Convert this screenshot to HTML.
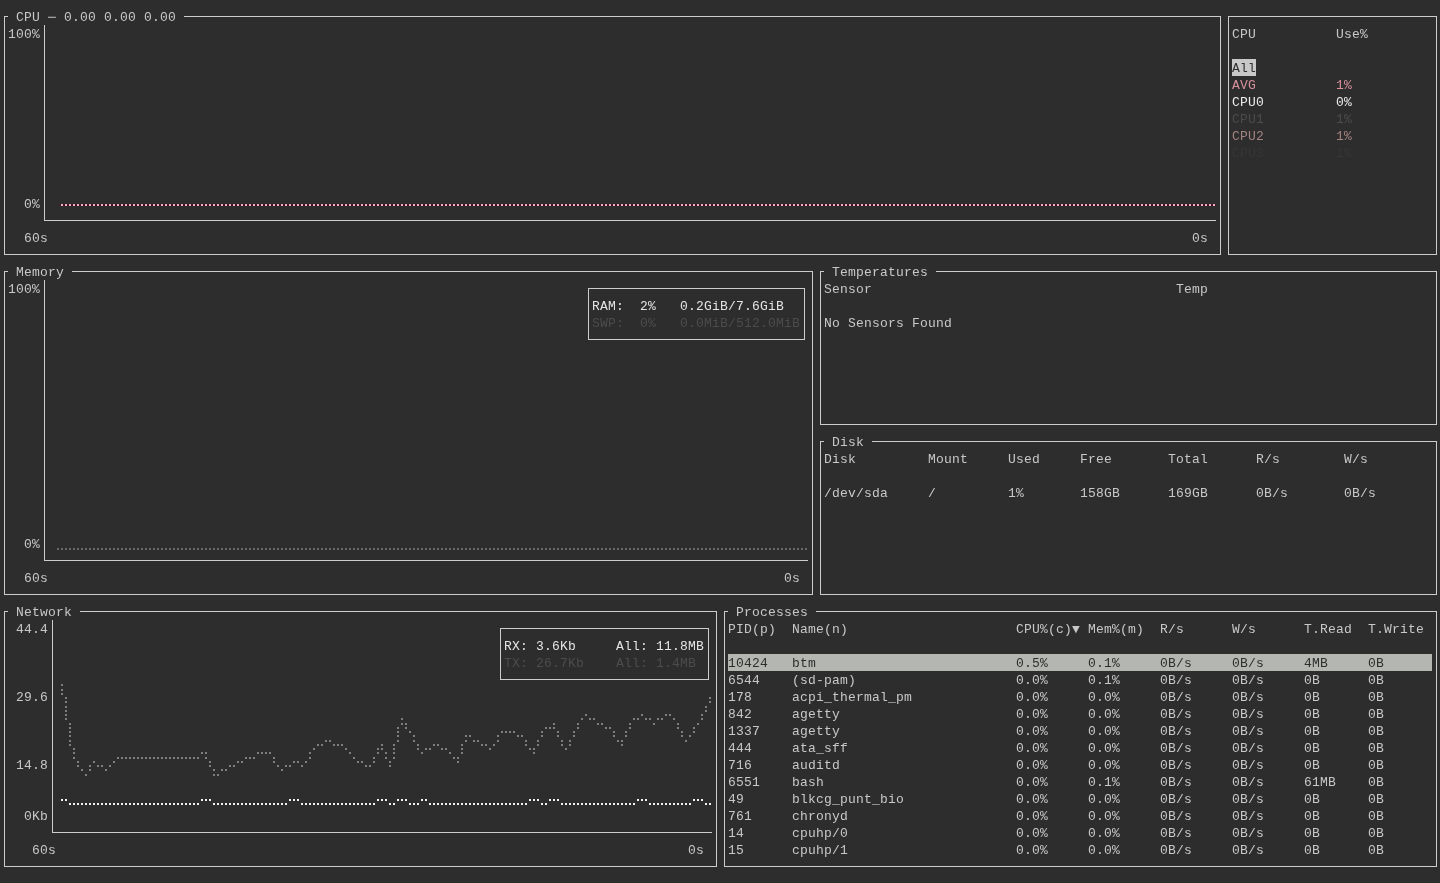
<!DOCTYPE html><html><head><meta charset="utf-8"><style>
html,body{margin:0;padding:0;}
body{width:1440px;height:883px;background:#2d2d2d;position:relative;overflow:hidden;font-family:"Liberation Mono",monospace;font-size:13.0px;}
.t{position:absolute;white-space:pre;letter-spacing:0.200px;line-height:17px;height:17px;}
svg{position:absolute;left:0;top:0;}
#tx{position:absolute;left:0;top:0;width:1440px;height:883px;will-change:transform;}
</style></head><body>
<div style="position:absolute;left:1232px;top:59px;width:24px;height:17px;background:#c8c8c8"></div>
<div style="position:absolute;left:728px;top:654px;width:704px;height:17px;background:#b4b6b2"></div>
<div id="tx">
<div class="t" style="left:16px;top:9px;color:#c8c8c8;">CPU ─ 0.00 0.00 0.00</div>
<div class="t" style="left:8px;top:26px;color:#c8c8c8;">100%</div>
<div class="t" style="left:24px;top:196px;color:#c8c8c8;">0%</div>
<div class="t" style="left:24px;top:230px;color:#c8c8c8;">60s</div>
<div class="t" style="left:1192px;top:230px;color:#c8c8c8;">0s</div>
<div class="t" style="left:1232px;top:26px;color:#c8c8c8;">CPU</div>
<div class="t" style="left:1336px;top:26px;color:#c8c8c8;">Use%</div>
<div class="t" style="left:1232px;top:60px;color:#2d2d2d;">All</div>
<div class="t" style="left:1232px;top:77px;color:#d8909e;">AVG</div>
<div class="t" style="left:1336px;top:77px;color:#d8909e;">1%</div>
<div class="t" style="left:1232px;top:94px;color:#ececec;">CPU0</div>
<div class="t" style="left:1336px;top:94px;color:#ececec;">0%</div>
<div class="t" style="left:1232px;top:111px;color:#4c4c4c;">CPU1</div>
<div class="t" style="left:1336px;top:111px;color:#4c4c4c;">1%</div>
<div class="t" style="left:1232px;top:128px;color:#a48480;">CPU2</div>
<div class="t" style="left:1336px;top:128px;color:#a48480;">1%</div>
<div class="t" style="left:1232px;top:145px;color:#363636;">CPU3</div>
<div class="t" style="left:1336px;top:145px;color:#363636;">1%</div>
<div class="t" style="left:16px;top:264px;color:#c8c8c8;">Memory</div>
<div class="t" style="left:8px;top:281px;color:#c8c8c8;">100%</div>
<div class="t" style="left:24px;top:536px;color:#c8c8c8;">0%</div>
<div class="t" style="left:24px;top:570px;color:#c8c8c8;">60s</div>
<div class="t" style="left:784px;top:570px;color:#c8c8c8;">0s</div>
<div class="t" style="left:592px;top:298px;color:#e4e4e4;">RAM:</div>
<div class="t" style="left:640px;top:298px;color:#e4e4e4;">2%</div>
<div class="t" style="left:680px;top:298px;color:#e4e4e4;">0.2GiB/7.6GiB</div>
<div class="t" style="left:592px;top:315px;color:#4c4c4c;">SWP:</div>
<div class="t" style="left:640px;top:315px;color:#4c4c4c;">0%</div>
<div class="t" style="left:680px;top:315px;color:#4c4c4c;">0.0MiB/512.0MiB</div>
<div class="t" style="left:832px;top:264px;color:#c8c8c8;">Temperatures</div>
<div class="t" style="left:824px;top:281px;color:#c8c8c8;">Sensor</div>
<div class="t" style="left:1176px;top:281px;color:#c8c8c8;">Temp</div>
<div class="t" style="left:824px;top:315px;color:#c8c8c8;">No Sensors Found</div>
<div class="t" style="left:832px;top:434px;color:#c8c8c8;">Disk</div>
<div class="t" style="left:824px;top:451px;color:#c8c8c8;">Disk</div>
<div class="t" style="left:928px;top:451px;color:#c8c8c8;">Mount</div>
<div class="t" style="left:1008px;top:451px;color:#c8c8c8;">Used</div>
<div class="t" style="left:1080px;top:451px;color:#c8c8c8;">Free</div>
<div class="t" style="left:1168px;top:451px;color:#c8c8c8;">Total</div>
<div class="t" style="left:1256px;top:451px;color:#c8c8c8;">R/s</div>
<div class="t" style="left:1344px;top:451px;color:#c8c8c8;">W/s</div>
<div class="t" style="left:824px;top:485px;color:#c8c8c8;">/dev/sda</div>
<div class="t" style="left:928px;top:485px;color:#c8c8c8;">/</div>
<div class="t" style="left:1008px;top:485px;color:#c8c8c8;">1%</div>
<div class="t" style="left:1080px;top:485px;color:#c8c8c8;">158GB</div>
<div class="t" style="left:1168px;top:485px;color:#c8c8c8;">169GB</div>
<div class="t" style="left:1256px;top:485px;color:#c8c8c8;">0B/s</div>
<div class="t" style="left:1344px;top:485px;color:#c8c8c8;">0B/s</div>
<div class="t" style="left:16px;top:604px;color:#c8c8c8;">Network</div>
<div class="t" style="left:16px;top:621px;color:#c8c8c8;">44.4</div>
<div class="t" style="left:16px;top:689px;color:#c8c8c8;">29.6</div>
<div class="t" style="left:16px;top:757px;color:#c8c8c8;">14.8</div>
<div class="t" style="left:24px;top:808px;color:#c8c8c8;">0Kb</div>
<div class="t" style="left:32px;top:842px;color:#c8c8c8;">60s</div>
<div class="t" style="left:688px;top:842px;color:#c8c8c8;">0s</div>
<div class="t" style="left:504px;top:638px;color:#e4e4e4;">RX:</div>
<div class="t" style="left:536px;top:638px;color:#e4e4e4;">3.6Kb</div>
<div class="t" style="left:616px;top:638px;color:#e4e4e4;">All:</div>
<div class="t" style="left:656px;top:638px;color:#e4e4e4;">11.8MB</div>
<div class="t" style="left:504px;top:655px;color:#4c4c4c;">TX:</div>
<div class="t" style="left:536px;top:655px;color:#4c4c4c;">26.7Kb</div>
<div class="t" style="left:616px;top:655px;color:#4c4c4c;">All:</div>
<div class="t" style="left:656px;top:655px;color:#4c4c4c;">1.4MB</div>
<div class="t" style="left:736px;top:604px;color:#c8c8c8;">Processes</div>
<div class="t" style="left:728px;top:621px;color:#c8c8c8;">PID(p)</div>
<div class="t" style="left:792px;top:621px;color:#c8c8c8;">Name(n)</div>
<div class="t" style="left:1016px;top:621px;color:#c8c8c8;">CPU%(c)▼</div>
<div class="t" style="left:1088px;top:621px;color:#c8c8c8;">Mem%(m)</div>
<div class="t" style="left:1160px;top:621px;color:#c8c8c8;">R/s</div>
<div class="t" style="left:1232px;top:621px;color:#c8c8c8;">W/s</div>
<div class="t" style="left:1304px;top:621px;color:#c8c8c8;">T.Read</div>
<div class="t" style="left:1368px;top:621px;color:#c8c8c8;">T.Write</div>
<div class="t" style="left:728px;top:655px;color:#2e2e2e;">10424</div>
<div class="t" style="left:792px;top:655px;color:#2e2e2e;">btm</div>
<div class="t" style="left:1016px;top:655px;color:#2e2e2e;">0.5%</div>
<div class="t" style="left:1088px;top:655px;color:#2e2e2e;">0.1%</div>
<div class="t" style="left:1160px;top:655px;color:#2e2e2e;">0B/s</div>
<div class="t" style="left:1232px;top:655px;color:#2e2e2e;">0B/s</div>
<div class="t" style="left:1304px;top:655px;color:#2e2e2e;">4MB</div>
<div class="t" style="left:1368px;top:655px;color:#2e2e2e;">0B</div>
<div class="t" style="left:728px;top:672px;color:#c8c8c8;">6544</div>
<div class="t" style="left:792px;top:672px;color:#c8c8c8;">(sd-pam)</div>
<div class="t" style="left:1016px;top:672px;color:#c8c8c8;">0.0%</div>
<div class="t" style="left:1088px;top:672px;color:#c8c8c8;">0.1%</div>
<div class="t" style="left:1160px;top:672px;color:#c8c8c8;">0B/s</div>
<div class="t" style="left:1232px;top:672px;color:#c8c8c8;">0B/s</div>
<div class="t" style="left:1304px;top:672px;color:#c8c8c8;">0B</div>
<div class="t" style="left:1368px;top:672px;color:#c8c8c8;">0B</div>
<div class="t" style="left:728px;top:689px;color:#c8c8c8;">178</div>
<div class="t" style="left:792px;top:689px;color:#c8c8c8;">acpi_thermal_pm</div>
<div class="t" style="left:1016px;top:689px;color:#c8c8c8;">0.0%</div>
<div class="t" style="left:1088px;top:689px;color:#c8c8c8;">0.0%</div>
<div class="t" style="left:1160px;top:689px;color:#c8c8c8;">0B/s</div>
<div class="t" style="left:1232px;top:689px;color:#c8c8c8;">0B/s</div>
<div class="t" style="left:1304px;top:689px;color:#c8c8c8;">0B</div>
<div class="t" style="left:1368px;top:689px;color:#c8c8c8;">0B</div>
<div class="t" style="left:728px;top:706px;color:#c8c8c8;">842</div>
<div class="t" style="left:792px;top:706px;color:#c8c8c8;">agetty</div>
<div class="t" style="left:1016px;top:706px;color:#c8c8c8;">0.0%</div>
<div class="t" style="left:1088px;top:706px;color:#c8c8c8;">0.0%</div>
<div class="t" style="left:1160px;top:706px;color:#c8c8c8;">0B/s</div>
<div class="t" style="left:1232px;top:706px;color:#c8c8c8;">0B/s</div>
<div class="t" style="left:1304px;top:706px;color:#c8c8c8;">0B</div>
<div class="t" style="left:1368px;top:706px;color:#c8c8c8;">0B</div>
<div class="t" style="left:728px;top:723px;color:#c8c8c8;">1337</div>
<div class="t" style="left:792px;top:723px;color:#c8c8c8;">agetty</div>
<div class="t" style="left:1016px;top:723px;color:#c8c8c8;">0.0%</div>
<div class="t" style="left:1088px;top:723px;color:#c8c8c8;">0.0%</div>
<div class="t" style="left:1160px;top:723px;color:#c8c8c8;">0B/s</div>
<div class="t" style="left:1232px;top:723px;color:#c8c8c8;">0B/s</div>
<div class="t" style="left:1304px;top:723px;color:#c8c8c8;">0B</div>
<div class="t" style="left:1368px;top:723px;color:#c8c8c8;">0B</div>
<div class="t" style="left:728px;top:740px;color:#c8c8c8;">444</div>
<div class="t" style="left:792px;top:740px;color:#c8c8c8;">ata_sff</div>
<div class="t" style="left:1016px;top:740px;color:#c8c8c8;">0.0%</div>
<div class="t" style="left:1088px;top:740px;color:#c8c8c8;">0.0%</div>
<div class="t" style="left:1160px;top:740px;color:#c8c8c8;">0B/s</div>
<div class="t" style="left:1232px;top:740px;color:#c8c8c8;">0B/s</div>
<div class="t" style="left:1304px;top:740px;color:#c8c8c8;">0B</div>
<div class="t" style="left:1368px;top:740px;color:#c8c8c8;">0B</div>
<div class="t" style="left:728px;top:757px;color:#c8c8c8;">716</div>
<div class="t" style="left:792px;top:757px;color:#c8c8c8;">auditd</div>
<div class="t" style="left:1016px;top:757px;color:#c8c8c8;">0.0%</div>
<div class="t" style="left:1088px;top:757px;color:#c8c8c8;">0.0%</div>
<div class="t" style="left:1160px;top:757px;color:#c8c8c8;">0B/s</div>
<div class="t" style="left:1232px;top:757px;color:#c8c8c8;">0B/s</div>
<div class="t" style="left:1304px;top:757px;color:#c8c8c8;">0B</div>
<div class="t" style="left:1368px;top:757px;color:#c8c8c8;">0B</div>
<div class="t" style="left:728px;top:774px;color:#c8c8c8;">6551</div>
<div class="t" style="left:792px;top:774px;color:#c8c8c8;">bash</div>
<div class="t" style="left:1016px;top:774px;color:#c8c8c8;">0.0%</div>
<div class="t" style="left:1088px;top:774px;color:#c8c8c8;">0.1%</div>
<div class="t" style="left:1160px;top:774px;color:#c8c8c8;">0B/s</div>
<div class="t" style="left:1232px;top:774px;color:#c8c8c8;">0B/s</div>
<div class="t" style="left:1304px;top:774px;color:#c8c8c8;">61MB</div>
<div class="t" style="left:1368px;top:774px;color:#c8c8c8;">0B</div>
<div class="t" style="left:728px;top:791px;color:#c8c8c8;">49</div>
<div class="t" style="left:792px;top:791px;color:#c8c8c8;">blkcg_punt_bio</div>
<div class="t" style="left:1016px;top:791px;color:#c8c8c8;">0.0%</div>
<div class="t" style="left:1088px;top:791px;color:#c8c8c8;">0.0%</div>
<div class="t" style="left:1160px;top:791px;color:#c8c8c8;">0B/s</div>
<div class="t" style="left:1232px;top:791px;color:#c8c8c8;">0B/s</div>
<div class="t" style="left:1304px;top:791px;color:#c8c8c8;">0B</div>
<div class="t" style="left:1368px;top:791px;color:#c8c8c8;">0B</div>
<div class="t" style="left:728px;top:808px;color:#c8c8c8;">761</div>
<div class="t" style="left:792px;top:808px;color:#c8c8c8;">chronyd</div>
<div class="t" style="left:1016px;top:808px;color:#c8c8c8;">0.0%</div>
<div class="t" style="left:1088px;top:808px;color:#c8c8c8;">0.0%</div>
<div class="t" style="left:1160px;top:808px;color:#c8c8c8;">0B/s</div>
<div class="t" style="left:1232px;top:808px;color:#c8c8c8;">0B/s</div>
<div class="t" style="left:1304px;top:808px;color:#c8c8c8;">0B</div>
<div class="t" style="left:1368px;top:808px;color:#c8c8c8;">0B</div>
<div class="t" style="left:728px;top:825px;color:#c8c8c8;">14</div>
<div class="t" style="left:792px;top:825px;color:#c8c8c8;">cpuhp/0</div>
<div class="t" style="left:1016px;top:825px;color:#c8c8c8;">0.0%</div>
<div class="t" style="left:1088px;top:825px;color:#c8c8c8;">0.0%</div>
<div class="t" style="left:1160px;top:825px;color:#c8c8c8;">0B/s</div>
<div class="t" style="left:1232px;top:825px;color:#c8c8c8;">0B/s</div>
<div class="t" style="left:1304px;top:825px;color:#c8c8c8;">0B</div>
<div class="t" style="left:1368px;top:825px;color:#c8c8c8;">0B</div>
<div class="t" style="left:728px;top:842px;color:#c8c8c8;">15</div>
<div class="t" style="left:792px;top:842px;color:#c8c8c8;">cpuhp/1</div>
<div class="t" style="left:1016px;top:842px;color:#c8c8c8;">0.0%</div>
<div class="t" style="left:1088px;top:842px;color:#c8c8c8;">0.0%</div>
<div class="t" style="left:1160px;top:842px;color:#c8c8c8;">0B/s</div>
<div class="t" style="left:1232px;top:842px;color:#c8c8c8;">0B/s</div>
<div class="t" style="left:1304px;top:842px;color:#c8c8c8;">0B</div>
<div class="t" style="left:1368px;top:842px;color:#c8c8c8;">0B</div>
</div>
<svg width="1440" height="883" shape-rendering="crispEdges"><rect x="60" y="205" width="1156" height="1" fill="#4a1020"/><rect x="60" y="204" width="1156" height="1" fill="#4a1020"/><rect x="4" y="16" width="4" height="1" fill="#cccccc"/><rect x="184" y="16" width="1037" height="1" fill="#cccccc"/><rect x="4" y="254" width="1217" height="1" fill="#cccccc"/><rect x="44" y="220" width="1172" height="1" fill="#cccccc"/><rect x="1228" y="16" width="209" height="1" fill="#cccccc"/><rect x="1228" y="254" width="209" height="1" fill="#cccccc"/><rect x="4" y="271" width="4" height="1" fill="#cccccc"/><rect x="72" y="271" width="741" height="1" fill="#cccccc"/><rect x="4" y="594" width="809" height="1" fill="#cccccc"/><rect x="44" y="560" width="764" height="1" fill="#cccccc"/><rect x="588" y="288" width="217" height="1" fill="#cccccc"/><rect x="588" y="339" width="217" height="1" fill="#cccccc"/><rect x="820" y="271" width="4" height="1" fill="#cccccc"/><rect x="936" y="271" width="501" height="1" fill="#cccccc"/><rect x="820" y="424" width="617" height="1" fill="#cccccc"/><rect x="820" y="441" width="4" height="1" fill="#cccccc"/><rect x="872" y="441" width="565" height="1" fill="#cccccc"/><rect x="820" y="594" width="617" height="1" fill="#cccccc"/><rect x="4" y="611" width="4" height="1" fill="#cccccc"/><rect x="80" y="611" width="637" height="1" fill="#cccccc"/><rect x="4" y="866" width="713" height="1" fill="#cccccc"/><rect x="52" y="832" width="660" height="1" fill="#cccccc"/><rect x="500" y="628" width="209" height="1" fill="#cccccc"/><rect x="500" y="679" width="209" height="1" fill="#cccccc"/><rect x="724" y="611" width="4" height="1" fill="#cccccc"/><rect x="816" y="611" width="621" height="1" fill="#cccccc"/><rect x="724" y="866" width="713" height="1" fill="#cccccc"/><rect x="4" y="16" width="1" height="239" fill="#cccccc"/><rect x="1220" y="16" width="1" height="239" fill="#cccccc"/><rect x="44" y="25" width="1" height="196" fill="#cccccc"/><rect x="1228" y="16" width="1" height="239" fill="#cccccc"/><rect x="1436" y="16" width="1" height="239" fill="#cccccc"/><rect x="4" y="271" width="1" height="324" fill="#cccccc"/><rect x="812" y="271" width="1" height="324" fill="#cccccc"/><rect x="44" y="280" width="1" height="281" fill="#cccccc"/><rect x="588" y="288" width="1" height="52" fill="#cccccc"/><rect x="804" y="288" width="1" height="52" fill="#cccccc"/><rect x="820" y="271" width="1" height="154" fill="#cccccc"/><rect x="1436" y="271" width="1" height="154" fill="#cccccc"/><rect x="820" y="441" width="1" height="154" fill="#cccccc"/><rect x="1436" y="441" width="1" height="154" fill="#cccccc"/><rect x="4" y="611" width="1" height="256" fill="#cccccc"/><rect x="716" y="611" width="1" height="256" fill="#cccccc"/><rect x="52" y="620" width="1" height="213" fill="#cccccc"/><rect x="500" y="628" width="1" height="52" fill="#cccccc"/><rect x="708" y="628" width="1" height="52" fill="#cccccc"/><rect x="724" y="611" width="1" height="256" fill="#cccccc"/><rect x="1436" y="611" width="1" height="256" fill="#cccccc"/><path d="M61 204h2v2h-2zM65 204h2v2h-2zM69 204h2v2h-2zM73 204h2v2h-2zM77 204h2v2h-2zM81 204h2v2h-2zM85 204h2v2h-2zM89 204h2v2h-2zM93 204h2v2h-2zM97 204h2v2h-2zM101 204h2v2h-2zM105 204h2v2h-2zM109 204h2v2h-2zM113 204h2v2h-2zM117 204h2v2h-2zM121 204h2v2h-2zM125 204h2v2h-2zM129 204h2v2h-2zM133 204h2v2h-2zM137 204h2v2h-2zM141 204h2v2h-2zM145 204h2v2h-2zM149 204h2v2h-2zM153 204h2v2h-2zM157 204h2v2h-2zM161 204h2v2h-2zM165 204h2v2h-2zM169 204h2v2h-2zM173 204h2v2h-2zM177 204h2v2h-2zM181 204h2v2h-2zM185 204h2v2h-2zM189 204h2v2h-2zM193 204h2v2h-2zM197 204h2v2h-2zM201 204h2v2h-2zM205 204h2v2h-2zM209 204h2v2h-2zM213 204h2v2h-2zM217 204h2v2h-2zM221 204h2v2h-2zM225 204h2v2h-2zM229 204h2v2h-2zM233 204h2v2h-2zM237 204h2v2h-2zM241 204h2v2h-2zM245 204h2v2h-2zM249 204h2v2h-2zM253 204h2v2h-2zM257 204h2v2h-2zM261 204h2v2h-2zM265 204h2v2h-2zM269 204h2v2h-2zM273 204h2v2h-2zM277 204h2v2h-2zM281 204h2v2h-2zM285 204h2v2h-2zM289 204h2v2h-2zM293 204h2v2h-2zM297 204h2v2h-2zM301 204h2v2h-2zM305 204h2v2h-2zM309 204h2v2h-2zM313 204h2v2h-2zM317 204h2v2h-2zM321 204h2v2h-2zM325 204h2v2h-2zM329 204h2v2h-2zM333 204h2v2h-2zM337 204h2v2h-2zM341 204h2v2h-2zM345 204h2v2h-2zM349 204h2v2h-2zM353 204h2v2h-2zM357 204h2v2h-2zM361 204h2v2h-2zM365 204h2v2h-2zM369 204h2v2h-2zM373 204h2v2h-2zM377 204h2v2h-2zM381 204h2v2h-2zM385 204h2v2h-2zM389 204h2v2h-2zM393 204h2v2h-2zM397 204h2v2h-2zM401 204h2v2h-2zM405 204h2v2h-2zM409 204h2v2h-2zM413 204h2v2h-2zM417 204h2v2h-2zM421 204h2v2h-2zM425 204h2v2h-2zM429 204h2v2h-2zM433 204h2v2h-2zM437 204h2v2h-2zM441 204h2v2h-2zM445 204h2v2h-2zM449 204h2v2h-2zM453 204h2v2h-2zM457 204h2v2h-2zM461 204h2v2h-2zM465 204h2v2h-2zM469 204h2v2h-2zM473 204h2v2h-2zM477 204h2v2h-2zM481 204h2v2h-2zM485 204h2v2h-2zM489 204h2v2h-2zM493 204h2v2h-2zM497 204h2v2h-2zM501 204h2v2h-2zM505 204h2v2h-2zM509 204h2v2h-2zM513 204h2v2h-2zM517 204h2v2h-2zM521 204h2v2h-2zM525 204h2v2h-2zM529 204h2v2h-2zM533 204h2v2h-2zM537 204h2v2h-2zM541 204h2v2h-2zM545 204h2v2h-2zM549 204h2v2h-2zM553 204h2v2h-2zM557 204h2v2h-2zM561 204h2v2h-2zM565 204h2v2h-2zM569 204h2v2h-2zM573 204h2v2h-2zM577 204h2v2h-2zM581 204h2v2h-2zM585 204h2v2h-2zM589 204h2v2h-2zM593 204h2v2h-2zM597 204h2v2h-2zM601 204h2v2h-2zM605 204h2v2h-2zM609 204h2v2h-2zM613 204h2v2h-2zM617 204h2v2h-2zM621 204h2v2h-2zM625 204h2v2h-2zM629 204h2v2h-2zM633 204h2v2h-2zM637 204h2v2h-2zM641 204h2v2h-2zM645 204h2v2h-2zM649 204h2v2h-2zM653 204h2v2h-2zM657 204h2v2h-2zM661 204h2v2h-2zM665 204h2v2h-2zM669 204h2v2h-2zM673 204h2v2h-2zM677 204h2v2h-2zM681 204h2v2h-2zM685 204h2v2h-2zM689 204h2v2h-2zM693 204h2v2h-2zM697 204h2v2h-2zM701 204h2v2h-2zM705 204h2v2h-2zM709 204h2v2h-2zM713 204h2v2h-2zM717 204h2v2h-2zM721 204h2v2h-2zM725 204h2v2h-2zM729 204h2v2h-2zM733 204h2v2h-2zM737 204h2v2h-2zM741 204h2v2h-2zM745 204h2v2h-2zM749 204h2v2h-2zM753 204h2v2h-2zM757 204h2v2h-2zM761 204h2v2h-2zM765 204h2v2h-2zM769 204h2v2h-2zM773 204h2v2h-2zM777 204h2v2h-2zM781 204h2v2h-2zM785 204h2v2h-2zM789 204h2v2h-2zM793 204h2v2h-2zM797 204h2v2h-2zM801 204h2v2h-2zM805 204h2v2h-2zM809 204h2v2h-2zM813 204h2v2h-2zM817 204h2v2h-2zM821 204h2v2h-2zM825 204h2v2h-2zM829 204h2v2h-2zM833 204h2v2h-2zM837 204h2v2h-2zM841 204h2v2h-2zM845 204h2v2h-2zM849 204h2v2h-2zM853 204h2v2h-2zM857 204h2v2h-2zM861 204h2v2h-2zM865 204h2v2h-2zM869 204h2v2h-2zM873 204h2v2h-2zM877 204h2v2h-2zM881 204h2v2h-2zM885 204h2v2h-2zM889 204h2v2h-2zM893 204h2v2h-2zM897 204h2v2h-2zM901 204h2v2h-2zM905 204h2v2h-2zM909 204h2v2h-2zM913 204h2v2h-2zM917 204h2v2h-2zM921 204h2v2h-2zM925 204h2v2h-2zM929 204h2v2h-2zM933 204h2v2h-2zM937 204h2v2h-2zM941 204h2v2h-2zM945 204h2v2h-2zM949 204h2v2h-2zM953 204h2v2h-2zM957 204h2v2h-2zM961 204h2v2h-2zM965 204h2v2h-2zM969 204h2v2h-2zM973 204h2v2h-2zM977 204h2v2h-2zM981 204h2v2h-2zM985 204h2v2h-2zM989 204h2v2h-2zM993 204h2v2h-2zM997 204h2v2h-2zM1001 204h2v2h-2zM1005 204h2v2h-2zM1009 204h2v2h-2zM1013 204h2v2h-2zM1017 204h2v2h-2zM1021 204h2v2h-2zM1025 204h2v2h-2zM1029 204h2v2h-2zM1033 204h2v2h-2zM1037 204h2v2h-2zM1041 204h2v2h-2zM1045 204h2v2h-2zM1049 204h2v2h-2zM1053 204h2v2h-2zM1057 204h2v2h-2zM1061 204h2v2h-2zM1065 204h2v2h-2zM1069 204h2v2h-2zM1073 204h2v2h-2zM1077 204h2v2h-2zM1081 204h2v2h-2zM1085 204h2v2h-2zM1089 204h2v2h-2zM1093 204h2v2h-2zM1097 204h2v2h-2zM1101 204h2v2h-2zM1105 204h2v2h-2zM1109 204h2v2h-2zM1113 204h2v2h-2zM1117 204h2v2h-2zM1121 204h2v2h-2zM1125 204h2v2h-2zM1129 204h2v2h-2zM1133 204h2v2h-2zM1137 204h2v2h-2zM1141 204h2v2h-2zM1145 204h2v2h-2zM1149 204h2v2h-2zM1153 204h2v2h-2zM1157 204h2v2h-2zM1161 204h2v2h-2zM1165 204h2v2h-2zM1169 204h2v2h-2zM1173 204h2v2h-2zM1177 204h2v2h-2zM1181 204h2v2h-2zM1185 204h2v2h-2zM1189 204h2v2h-2zM1193 204h2v2h-2zM1197 204h2v2h-2zM1201 204h2v2h-2zM1205 204h2v2h-2zM1209 204h2v2h-2zM1213 204h2v2h-2z" fill="#eab4c4"/><path d="M57 548h2v2h-2zM61 548h2v2h-2zM65 548h2v2h-2zM69 548h2v2h-2zM73 548h2v2h-2zM77 548h2v2h-2zM81 548h2v2h-2zM85 548h2v2h-2zM89 548h2v2h-2zM93 548h2v2h-2zM97 548h2v2h-2zM101 548h2v2h-2zM105 548h2v2h-2zM109 548h2v2h-2zM113 548h2v2h-2zM117 548h2v2h-2zM121 548h2v2h-2zM125 548h2v2h-2zM129 548h2v2h-2zM133 548h2v2h-2zM137 548h2v2h-2zM141 548h2v2h-2zM145 548h2v2h-2zM149 548h2v2h-2zM153 548h2v2h-2zM157 548h2v2h-2zM161 548h2v2h-2zM165 548h2v2h-2zM169 548h2v2h-2zM173 548h2v2h-2zM177 548h2v2h-2zM181 548h2v2h-2zM185 548h2v2h-2zM189 548h2v2h-2zM193 548h2v2h-2zM197 548h2v2h-2zM201 548h2v2h-2zM205 548h2v2h-2zM209 548h2v2h-2zM213 548h2v2h-2zM217 548h2v2h-2zM221 548h2v2h-2zM225 548h2v2h-2zM229 548h2v2h-2zM233 548h2v2h-2zM237 548h2v2h-2zM241 548h2v2h-2zM245 548h2v2h-2zM249 548h2v2h-2zM253 548h2v2h-2zM257 548h2v2h-2zM261 548h2v2h-2zM265 548h2v2h-2zM269 548h2v2h-2zM273 548h2v2h-2zM277 548h2v2h-2zM281 548h2v2h-2zM285 548h2v2h-2zM289 548h2v2h-2zM293 548h2v2h-2zM297 548h2v2h-2zM301 548h2v2h-2zM305 548h2v2h-2zM309 548h2v2h-2zM313 548h2v2h-2zM317 548h2v2h-2zM321 548h2v2h-2zM325 548h2v2h-2zM329 548h2v2h-2zM333 548h2v2h-2zM337 548h2v2h-2zM341 548h2v2h-2zM345 548h2v2h-2zM349 548h2v2h-2zM353 548h2v2h-2zM357 548h2v2h-2zM361 548h2v2h-2zM365 548h2v2h-2zM369 548h2v2h-2zM373 548h2v2h-2zM377 548h2v2h-2zM381 548h2v2h-2zM385 548h2v2h-2zM389 548h2v2h-2zM393 548h2v2h-2zM397 548h2v2h-2zM401 548h2v2h-2zM405 548h2v2h-2zM409 548h2v2h-2zM413 548h2v2h-2zM417 548h2v2h-2zM421 548h2v2h-2zM425 548h2v2h-2zM429 548h2v2h-2zM433 548h2v2h-2zM437 548h2v2h-2zM441 548h2v2h-2zM445 548h2v2h-2zM449 548h2v2h-2zM453 548h2v2h-2zM457 548h2v2h-2zM461 548h2v2h-2zM465 548h2v2h-2zM469 548h2v2h-2zM473 548h2v2h-2zM477 548h2v2h-2zM481 548h2v2h-2zM485 548h2v2h-2zM489 548h2v2h-2zM493 548h2v2h-2zM497 548h2v2h-2zM501 548h2v2h-2zM505 548h2v2h-2zM509 548h2v2h-2zM513 548h2v2h-2zM517 548h2v2h-2zM521 548h2v2h-2zM525 548h2v2h-2zM529 548h2v2h-2zM533 548h2v2h-2zM537 548h2v2h-2zM541 548h2v2h-2zM545 548h2v2h-2zM549 548h2v2h-2zM553 548h2v2h-2zM557 548h2v2h-2zM561 548h2v2h-2zM565 548h2v2h-2zM569 548h2v2h-2zM573 548h2v2h-2zM577 548h2v2h-2zM581 548h2v2h-2zM585 548h2v2h-2zM589 548h2v2h-2zM593 548h2v2h-2zM597 548h2v2h-2zM601 548h2v2h-2zM605 548h2v2h-2zM609 548h2v2h-2zM613 548h2v2h-2zM617 548h2v2h-2zM621 548h2v2h-2zM625 548h2v2h-2zM629 548h2v2h-2zM633 548h2v2h-2zM637 548h2v2h-2zM641 548h2v2h-2zM645 548h2v2h-2zM649 548h2v2h-2zM653 548h2v2h-2zM657 548h2v2h-2zM661 548h2v2h-2zM665 548h2v2h-2zM669 548h2v2h-2zM673 548h2v2h-2zM677 548h2v2h-2zM681 548h2v2h-2zM685 548h2v2h-2zM689 548h2v2h-2zM693 548h2v2h-2zM697 548h2v2h-2zM701 548h2v2h-2zM705 548h2v2h-2zM709 548h2v2h-2zM713 548h2v2h-2zM717 548h2v2h-2zM721 548h2v2h-2zM725 548h2v2h-2zM729 548h2v2h-2zM733 548h2v2h-2zM737 548h2v2h-2zM741 548h2v2h-2zM745 548h2v2h-2zM749 548h2v2h-2zM753 548h2v2h-2zM757 548h2v2h-2zM761 548h2v2h-2zM765 548h2v2h-2zM769 548h2v2h-2zM773 548h2v2h-2zM777 548h2v2h-2zM781 548h2v2h-2zM785 548h2v2h-2zM789 548h2v2h-2zM793 548h2v2h-2zM797 548h2v2h-2zM801 548h2v2h-2zM805 548h2v2h-2z" fill="#6a6a6a"/><path d="M61 684h2v2h-2zM61 689h2v2h-2zM61 693h2v2h-2zM65 697h2v2h-2zM65 701h2v2h-2zM65 706h2v2h-2zM65 710h2v2h-2zM65 714h2v2h-2zM65 718h2v2h-2zM69 723h2v2h-2zM69 727h2v2h-2zM69 731h2v2h-2zM69 735h2v2h-2zM69 740h2v2h-2zM69 744h2v2h-2zM73 748h2v2h-2zM73 752h2v2h-2zM73 757h2v2h-2zM77 761h2v2h-2zM77 765h2v2h-2zM81 769h2v2h-2zM85 774h2v2h-2zM89 765h2v2h-2zM89 769h2v2h-2zM93 761h2v2h-2zM97 765h2v2h-2zM101 765h2v2h-2zM105 769h2v2h-2zM109 765h2v2h-2zM113 761h2v2h-2zM117 757h2v2h-2zM121 757h2v2h-2zM125 757h2v2h-2zM129 757h2v2h-2zM133 757h2v2h-2zM137 757h2v2h-2zM141 757h2v2h-2zM145 757h2v2h-2zM149 757h2v2h-2zM153 757h2v2h-2zM157 757h2v2h-2zM161 757h2v2h-2zM165 757h2v2h-2zM169 757h2v2h-2zM173 757h2v2h-2zM177 757h2v2h-2zM181 757h2v2h-2zM185 757h2v2h-2zM189 757h2v2h-2zM193 757h2v2h-2zM197 757h2v2h-2zM201 752h2v2h-2zM205 752h2v2h-2zM205 757h2v2h-2zM209 761h2v2h-2zM209 765h2v2h-2zM213 769h2v2h-2zM213 774h2v2h-2zM217 774h2v2h-2zM221 769h2v2h-2zM225 769h2v2h-2zM229 765h2v2h-2zM233 765h2v2h-2zM237 761h2v2h-2zM241 761h2v2h-2zM245 757h2v2h-2zM249 757h2v2h-2zM253 757h2v2h-2zM257 752h2v2h-2zM261 752h2v2h-2zM265 752h2v2h-2zM269 752h2v2h-2zM273 757h2v2h-2zM273 761h2v2h-2zM277 765h2v2h-2zM281 769h2v2h-2zM285 765h2v2h-2zM289 765h2v2h-2zM293 761h2v2h-2zM297 761h2v2h-2zM301 765h2v2h-2zM305 761h2v2h-2zM309 752h2v2h-2zM309 757h2v2h-2zM313 748h2v2h-2zM317 744h2v2h-2zM321 744h2v2h-2zM325 740h2v2h-2zM329 740h2v2h-2zM333 744h2v2h-2zM337 744h2v2h-2zM341 744h2v2h-2zM345 748h2v2h-2zM349 752h2v2h-2zM353 757h2v2h-2zM357 761h2v2h-2zM361 761h2v2h-2zM365 765h2v2h-2zM369 765h2v2h-2zM373 757h2v2h-2zM373 761h2v2h-2zM377 748h2v2h-2zM377 752h2v2h-2zM381 744h2v2h-2zM381 748h2v2h-2zM385 752h2v2h-2zM385 757h2v2h-2zM389 761h2v2h-2zM389 765h2v2h-2zM393 744h2v2h-2zM393 748h2v2h-2zM393 752h2v2h-2zM393 757h2v2h-2zM397 727h2v2h-2zM397 731h2v2h-2zM397 735h2v2h-2zM397 740h2v2h-2zM401 718h2v2h-2zM401 723h2v2h-2zM405 723h2v2h-2zM405 727h2v2h-2zM409 731h2v2h-2zM413 735h2v2h-2zM413 740h2v2h-2zM417 744h2v2h-2zM417 748h2v2h-2zM421 752h2v2h-2zM425 748h2v2h-2zM429 748h2v2h-2zM433 744h2v2h-2zM437 744h2v2h-2zM441 748h2v2h-2zM445 748h2v2h-2zM449 752h2v2h-2zM453 757h2v2h-2zM457 757h2v2h-2zM457 761h2v2h-2zM461 744h2v2h-2zM461 748h2v2h-2zM461 752h2v2h-2zM465 735h2v2h-2zM465 740h2v2h-2zM469 735h2v2h-2zM473 740h2v2h-2zM477 740h2v2h-2zM481 744h2v2h-2zM485 744h2v2h-2zM489 748h2v2h-2zM493 744h2v2h-2zM497 735h2v2h-2zM497 740h2v2h-2zM501 731h2v2h-2zM505 731h2v2h-2zM509 731h2v2h-2zM513 731h2v2h-2zM517 735h2v2h-2zM521 735h2v2h-2zM525 740h2v2h-2zM525 744h2v2h-2zM529 748h2v2h-2zM533 748h2v2h-2zM533 752h2v2h-2zM537 740h2v2h-2zM537 744h2v2h-2zM541 731h2v2h-2zM541 735h2v2h-2zM545 727h2v2h-2zM549 727h2v2h-2zM553 723h2v2h-2zM553 727h2v2h-2zM557 731h2v2h-2zM557 735h2v2h-2zM561 740h2v2h-2zM561 744h2v2h-2zM565 748h2v2h-2zM569 740h2v2h-2zM569 744h2v2h-2zM573 731h2v2h-2zM573 735h2v2h-2zM577 723h2v2h-2zM577 727h2v2h-2zM581 718h2v2h-2zM585 714h2v2h-2zM589 718h2v2h-2zM593 718h2v2h-2zM597 723h2v2h-2zM601 723h2v2h-2zM605 727h2v2h-2zM609 727h2v2h-2zM613 731h2v2h-2zM613 735h2v2h-2zM617 740h2v2h-2zM621 740h2v2h-2zM621 744h2v2h-2zM625 731h2v2h-2zM625 735h2v2h-2zM629 723h2v2h-2zM629 727h2v2h-2zM633 718h2v2h-2zM637 718h2v2h-2zM641 714h2v2h-2zM645 718h2v2h-2zM649 718h2v2h-2zM653 723h2v2h-2zM657 718h2v2h-2zM661 718h2v2h-2zM665 714h2v2h-2zM669 714h2v2h-2zM673 718h2v2h-2zM677 723h2v2h-2zM677 727h2v2h-2zM681 731h2v2h-2zM681 735h2v2h-2zM685 740h2v2h-2zM689 735h2v2h-2zM693 727h2v2h-2zM693 731h2v2h-2zM697 723h2v2h-2zM701 714h2v2h-2zM701 718h2v2h-2zM705 706h2v2h-2zM705 710h2v2h-2zM709 697h2v2h-2zM709 701h2v2h-2z" fill="#7e7e7e"/><path d="M61 799h2v2h-2zM65 799h2v2h-2zM69 803h2v2h-2zM73 803h2v2h-2zM77 803h2v2h-2zM81 803h2v2h-2zM85 803h2v2h-2zM89 803h2v2h-2zM93 803h2v2h-2zM97 803h2v2h-2zM101 803h2v2h-2zM105 803h2v2h-2zM109 803h2v2h-2zM113 803h2v2h-2zM117 803h2v2h-2zM121 803h2v2h-2zM125 803h2v2h-2zM129 803h2v2h-2zM133 803h2v2h-2zM137 803h2v2h-2zM141 803h2v2h-2zM145 803h2v2h-2zM149 803h2v2h-2zM153 803h2v2h-2zM157 803h2v2h-2zM161 803h2v2h-2zM165 803h2v2h-2zM169 803h2v2h-2zM173 803h2v2h-2zM177 803h2v2h-2zM181 803h2v2h-2zM185 803h2v2h-2zM189 803h2v2h-2zM193 803h2v2h-2zM197 803h2v2h-2zM201 799h2v2h-2zM205 799h2v2h-2zM209 799h2v2h-2zM213 803h2v2h-2zM217 803h2v2h-2zM221 803h2v2h-2zM225 803h2v2h-2zM229 803h2v2h-2zM233 803h2v2h-2zM237 803h2v2h-2zM241 803h2v2h-2zM245 803h2v2h-2zM249 803h2v2h-2zM253 803h2v2h-2zM257 803h2v2h-2zM261 803h2v2h-2zM265 803h2v2h-2zM269 803h2v2h-2zM273 803h2v2h-2zM277 803h2v2h-2zM281 803h2v2h-2zM285 803h2v2h-2zM289 799h2v2h-2zM293 799h2v2h-2zM297 799h2v2h-2zM301 803h2v2h-2zM305 803h2v2h-2zM309 803h2v2h-2zM313 803h2v2h-2zM317 803h2v2h-2zM321 803h2v2h-2zM325 803h2v2h-2zM329 803h2v2h-2zM333 803h2v2h-2zM337 803h2v2h-2zM341 803h2v2h-2zM345 803h2v2h-2zM349 803h2v2h-2zM353 803h2v2h-2zM357 803h2v2h-2zM361 803h2v2h-2zM365 803h2v2h-2zM369 803h2v2h-2zM373 803h2v2h-2zM377 799h2v2h-2zM381 799h2v2h-2zM385 799h2v2h-2zM389 803h2v2h-2zM393 803h2v2h-2zM397 799h2v2h-2zM401 799h2v2h-2zM405 799h2v2h-2zM409 803h2v2h-2zM413 803h2v2h-2zM417 803h2v2h-2zM421 799h2v2h-2zM425 799h2v2h-2zM429 803h2v2h-2zM433 803h2v2h-2zM437 803h2v2h-2zM441 803h2v2h-2zM445 803h2v2h-2zM449 803h2v2h-2zM453 803h2v2h-2zM457 803h2v2h-2zM461 803h2v2h-2zM465 803h2v2h-2zM469 803h2v2h-2zM473 803h2v2h-2zM477 803h2v2h-2zM481 803h2v2h-2zM485 803h2v2h-2zM489 803h2v2h-2zM493 803h2v2h-2zM497 803h2v2h-2zM501 803h2v2h-2zM505 803h2v2h-2zM509 803h2v2h-2zM513 803h2v2h-2zM517 803h2v2h-2zM521 803h2v2h-2zM525 803h2v2h-2zM529 799h2v2h-2zM533 799h2v2h-2zM537 799h2v2h-2zM541 803h2v2h-2zM545 803h2v2h-2zM549 799h2v2h-2zM553 799h2v2h-2zM557 799h2v2h-2zM561 803h2v2h-2zM565 803h2v2h-2zM569 803h2v2h-2zM573 803h2v2h-2zM577 803h2v2h-2zM581 803h2v2h-2zM585 803h2v2h-2zM589 803h2v2h-2zM593 803h2v2h-2zM597 803h2v2h-2zM601 803h2v2h-2zM605 803h2v2h-2zM609 803h2v2h-2zM613 803h2v2h-2zM617 803h2v2h-2zM621 803h2v2h-2zM625 803h2v2h-2zM629 803h2v2h-2zM633 803h2v2h-2zM637 799h2v2h-2zM641 799h2v2h-2zM645 799h2v2h-2zM649 803h2v2h-2zM653 803h2v2h-2zM657 803h2v2h-2zM661 803h2v2h-2zM665 803h2v2h-2zM669 803h2v2h-2zM673 803h2v2h-2zM677 803h2v2h-2zM681 803h2v2h-2zM685 803h2v2h-2zM689 803h2v2h-2zM693 799h2v2h-2zM697 799h2v2h-2zM701 799h2v2h-2zM705 803h2v2h-2zM709 803h2v2h-2z" fill="#f2f2f2"/></svg>
</body></html>
